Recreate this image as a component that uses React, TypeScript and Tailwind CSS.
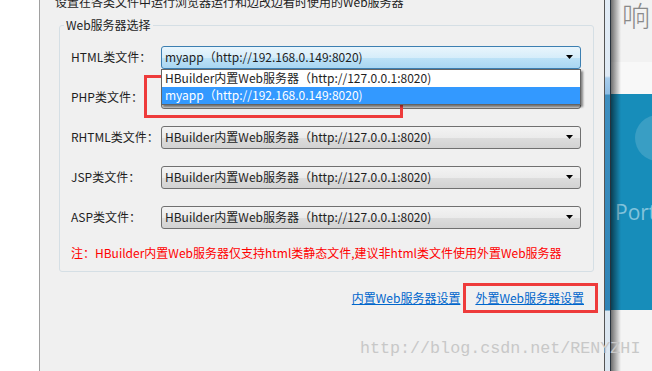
import React from "react";

const rows = [
  { label: "HTML类文件：", value: "myapp（http://192.168.0.149:8020)", open: true },
  { label: "PHP类文件：", value: "HBuilder内置Web服务器（http://127.0.0.1:8020)" },
  { label: "RHTML类文件：", value: "HBuilder内置Web服务器（http://127.0.0.1:8020)" },
  { label: "JSP类文件：", value: "HBuilder内置Web服务器（http://127.0.0.1:8020)" },
  { label: "ASP类文件：", value: "HBuilder内置Web服务器（http://127.0.0.1:8020)" },
];

function Arrow() {
  return (
    <svg className="w-[7px] h-[4px]" viewBox="0 0 7 4">
      <polygon points="0,0 7,0 3.5,4" fill="#000" />
    </svg>
  );
}

function Select({ value, open }: { value: string; open?: boolean }) {
  return (
    <div className="relative w-[420px]">
      <div
        className={
          open
            ? "h-[23px] flex items-center justify-between pl-[3px] pr-[7px] rounded-[3px] border border-[#3c7fb1] bg-[linear-gradient(to_bottom,#e9f5fc_0%,#d6edfa_50%,#bde2f7_51%,#a9d6f2_100%)]"
            : "h-[23px] flex items-center justify-between pl-[3px] pr-[7px] rounded-[3px] border border-[#707070] bg-[linear-gradient(to_bottom,#f3f3f3_0%,#ebebeb_50%,#dddddd_51%,#d2d2d2_100%)]"
        }
      >
        <span className="whitespace-nowrap">{value}</span>
        <Arrow />
      </div>

      {/* open list */}
      {open && (
        <div className="absolute left-0 top-full w-[420px] z-10 bg-white border border-[#646464] shadow-[2px_2px_2px_rgba(0,0,0,0.45)]">
          <div className="h-[17px] flex items-center pl-[3px] whitespace-nowrap">
            HBuilder内置Web服务器（http://127.0.0.1:8020)
          </div>
          <div className="h-[17px] flex items-center pl-[3px] whitespace-nowrap bg-[#3399ff] text-white">
            myapp（http://192.168.0.149:8020)
          </div>
        </div>
      )}
    </div>
  );
}

export default function App() {
  return (
    <div className="relative w-[652px] h-[371px] overflow-hidden flex bg-white text-[12px] leading-[16px] text-[#1e1e1e] font-[family-name:'Noto_Sans_CJK_SC',sans-serif]">
      <div className="w-[39px] shrink-0 bg-white" />

      {/* dialog */}
      <div className="w-[566px] shrink-0 bg-[#f0f0f0] border-l border-l-[#a0a0a0] border-r border-r-[#555555] pl-[19px] pr-[10px]">
        <div className="-mt-[6px] -ml-[4px] whitespace-nowrap">
          设置在各类文件中运行浏览器运行和边改边看时使用的Web服务器
        </div>

        <fieldset className="mt-[8px] border border-[#d5dfe5] rounded-[3px] pl-[11px] pr-[11px] pt-[5px] pb-[10px]">
          <legend className="-ml-[7px] px-[2px] leading-[14px]">Web服务器选择</legend>

          {rows.map((r) => (
            <div key={r.label} className="h-[40px] flex items-center">
              <div className="w-[90px] shrink-0 whitespace-nowrap">{r.label}</div>
              <Select value={r.value} open={r.open} />
            </div>
          ))}

          <div className="mt-[8px] text-[#ff0000] whitespace-nowrap">
            注：HBuilder内置Web服务器仅支持html类静态文件,建议非html类文件使用外置Web服务器
          </div>
        </fieldset>

        <div className="mt-[18px] flex justify-end gap-[15px] pr-[10px] text-[#0066cc] underline">
          <span>内置Web服务器设置</span>
          <span>外置Web服务器设置</span>
        </div>
      </div>

      {/* window frame */}
      <div className="w-[5px] shrink-0 bg-[linear-gradient(to_bottom,#e2ecf6_0px,#dfeaf5_76px,#a9cdec_78px,#8fbde3_94px,#3f8fc0_95px,#2f84b6_310px,#dce7f1_311px,#dce7f1_371px)]" />
      <div className="w-[1px] shrink-0 bg-[#27323d]" />

      {/* page behind */}
      <div className="relative flex-1 flex flex-col">
        <div className="h-[62px] bg-[#f2f2f2] pl-[11px] text-[28px] leading-[30px] font-light text-[#8a8a8a]">
          响
        </div>
        <div className="h-[32px] bg-[#f8f8f8]" />
        <div className="relative h-[216px] bg-[#178dba] overflow-hidden">
          <div className="absolute left-[24px] top-[21px] w-[46px] h-[46px] rounded-full bg-white/15" />
          <div className="absolute left-[4px] top-[106px] text-[21px] leading-[24px] text-[#82c3dc] font-[family-name:'Open_Sans',sans-serif]">
            Portal
          </div>
        </div>
        <div className="flex-1 bg-[#f4f4f4]" />
        <div className="absolute inset-y-0 left-0 w-[10px] bg-[linear-gradient(to_right,rgba(0,0,0,0.55),rgba(0,0,0,0))]" />
      </div>

      {/* annotations */}
      <div className="absolute left-[144px] top-[75px] w-[259px] h-[43px] border-[3px] border-[#ee3b3b]" />
      <div className="absolute left-[463px] top-[283px] w-[135px] h-[30px] border-[3px] border-[#ee3b3b]" />
      <svg className="absolute left-0 top-0 w-[652px] h-[371px] pointer-events-none" viewBox="0 0 652 371">
        <polygon
          points="387,97 405,90.5 402.5,94.5 474,96 474,98 402.5,100 405,104"
          fill="#ee3b3b"
        />
      </svg>

      {/* watermark */}
      <div className="absolute left-[360px] top-[338px] text-[16.7px] leading-[22px] text-[#c8c8c8] whitespace-nowrap font-[family-name:'Liberation_Mono',monospace]">
        http://blog.csdn.net/RENYZHI
      </div>
    </div>
  );
}
